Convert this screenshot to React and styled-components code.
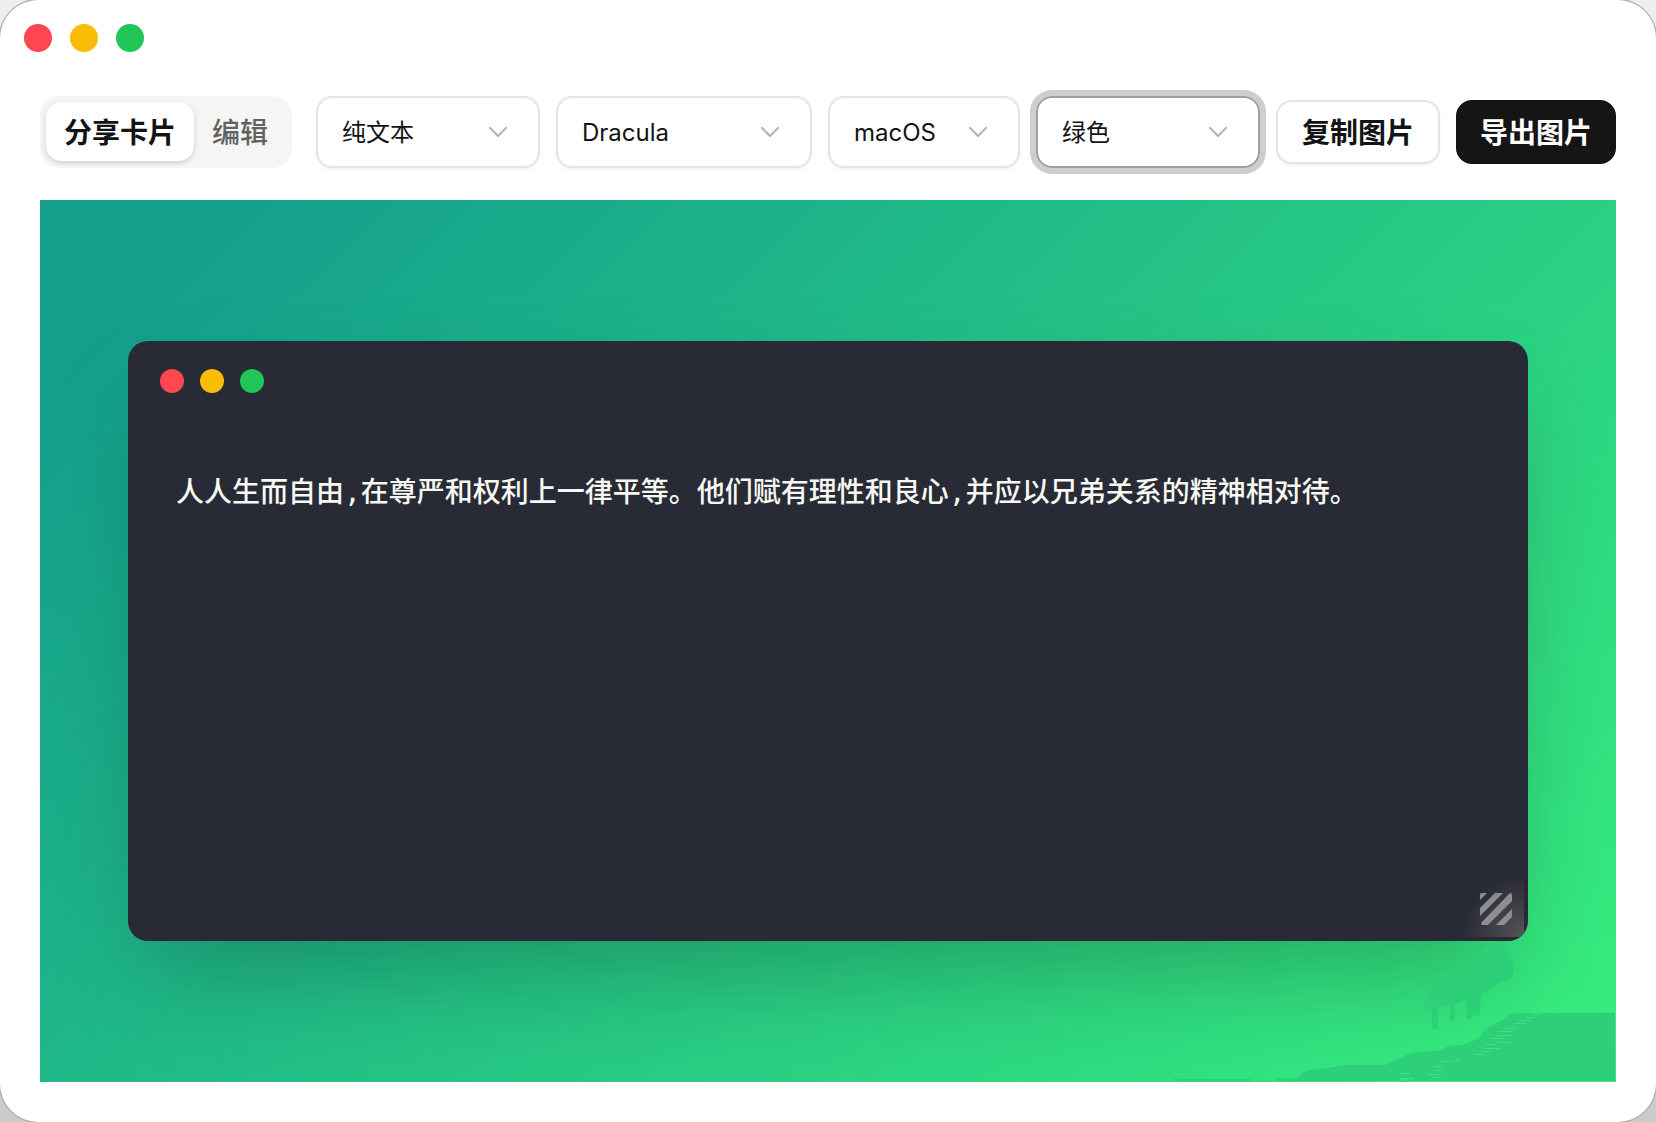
import React from 'react'
import styled, { createGlobalStyle } from 'styled-components'


const themes = [
  { label: '纯文本', width: 224, cjk: true },
  { label: 'Dracula', width: 256 },
  { label: 'macOS', width: 192 },
  { label: '绿色', width: 224, cjk: true, focused: true },
]

function Lights({ size, gap }) {
  return (
    <LightRow $gap={gap}>
      <Light $size={size} $color='#ff474f' />
      <Light $size={size} $color='#f8bd04' />
      <Light $size={size} $color='#20c657' />
    </LightRow>
  )
}

function Chevron() {
  return (
    <svg width='20' height='12' viewBox='0 0 20 12' fill='none'>
      <path d='M2 2 L10 10 L18 2' stroke='#b9b9ba' strokeWidth='2.4' strokeLinecap='round' strokeLinejoin='round' />
    </svg>
  )
}

function App() {
  return (
<>
<GlobalStyle />
<Desktop>
<Window>
  <TitleBar>
    <Lights size={28} gap={18} />
  </TitleBar>
  <Toolbar>
    <Segmented>
      <Segment $active>分享卡片</Segment>
      <Segment>编辑</Segment>
    </Segmented>
    {themes.map((item) => (
      <Select key={item.label} $width={item.width} $focused={item.focused}>
        <Label $cjk={item.cjk}>{item.label}</Label>
        <Chevron />
      </Select>
    ))}
    <Button>复制图片</Button>
    <Button $primary>导出图片</Button>
  </Toolbar>
  <Canvas>
    <Banding viewBox='1160 940 456 142'>
      <path d='M1483 948 L1506 944 L1508 958 L1514 963 L1514 970 L1511 980 L1500 982 L1492 988 L1481 994 L1480 1016 L1475 1015 L1467 1020 L1466 999 L1455 1005 L1454 1021 L1450 1021 L1450 1005 L1438 1007 L1438 1029 L1432 1029 L1432 1009 L1424 1009 L1425 997 L1429 986 L1450 978 L1472 966 Z' />
      <path d='M1370 993 h14 l-2 3 l-6 3 l-5 -3 Z M1403 989 h6 v8 h-5 Z' />
      <path d='M1615 1013 H1511 L1502 1020 L1486 1029 L1478 1039 L1462 1045 L1448 1046 L1442 1050 L1433 1051 L1411 1053 L1393 1061 L1385 1065 H1346 L1328 1068 L1309 1070 L1302 1073 L1297 1078 L1276 1079 V1081 H1615 Z' />
      <path d='M1173 1079 h78 v2 h-78 Z' />
      <g>
        <path d='M1534 1014.5 h8 M1526 1017.5 h10 M1519 1020.5 h12 M1516 1023.5 h10 M1505 1028.5 h10 M1498 1031.5 h14 M1496 1035.5 h14 M1490 1038.5 h14 M1498 1042.5 h14 M1486 1044.5 h10 M1484 1048.5 h16 M1480 1051.5 h12 M1474 1054.5 h12 M1440 1061.5 h10 M1454 1060.5 h6 M1434 1066.5 h8 M1400 1073.5 h10 M1434 1070.5 h8 M1428 1074.5 h14 M1400 1078.5 h14 M1432 1077.5 h8 M1398 1080 h10' />
      </g>
    </Banding>
    <Card>
      <Lights size={24} gap={16} />
      <Code>人人生而自由,在尊严和权利上一律平等。他们赋有理性和良心,并应以兄弟关系的精神相对待。</Code>
      <Grip>
        <svg width='32' height='32' viewBox='0 0 32 32'>
          <path d='M0 2 Q0 0 2 0 H7 L0 7 Z M15 0 H23 L0 23 V15 Z M30 0 Q32 0 32 2 V8 L8 32 H2 L1 30 Z M32 16 V24 L24 32 H16 Z' fill='#8e8e91' />
        </svg>
      </Grip>
    </Card>
  </Canvas>
</Window>
</Desktop>
</>
  )
}

export default App

const GlobalStyle = createGlobalStyle`
  * {
    box-sizing: border-box;
  }

  body {
    margin: 0;
    font-family: Inter, 'Noto Sans CJK SC', sans-serif;
    color: #121314;
  }
`

const Desktop = styled.div`
  width: 1656px;
  height: 1122px;
  background: linear-gradient(#efefed, #cbcbca);
  overflow: hidden;
`

const Window = styled.div`
  height: 100%;
  padding: 24px 40px 40px;
  background: #fff;
  border-radius: 38px;
  box-shadow: 0 0 0 1px #a5a5a5;
`

const TitleBar = styled.div`
  height: 72px;
  margin-left: -16px;
`

const LightRow = styled.div`
  display: flex;
  gap: ${(p) => p.$gap}px;
`

const Light = styled.div`
  width: ${(p) => p.$size}px;
  height: ${(p) => p.$size}px;
  border-radius: 50%;
  background: ${(p) => p.$color};
`

const Toolbar = styled.div`
  display: flex;
  align-items: center;
  height: 72px;
  gap: 16px;
`

const Segmented = styled.div`
  display: flex;
  width: 252px;
  height: 72px;
  margin-right: 8px;
  padding: 6px;
  border-radius: 20px;
  background: #f5f5f4;
`

const Segment = styled.div`
  display: flex;
  align-items: center;
  justify-content: center;
  width: ${(p) => (p.$active ? 148 : 92)}px;
  height: 59px;
  padding-bottom: 2px;
  border-radius: 15px;
  font-size: 28px;
  font-weight: ${(p) => (p.$active ? 600 : 500)};
  color: ${(p) => (p.$active ? '#121314' : '#626264')};
  background: ${(p) => (p.$active ? '#fff' : 'none')};
  box-shadow: ${(p) => (p.$active ? '0 2px 5px rgba(0, 0, 0, 0.16)' : 'none')};
`

const Select = styled.div`
  display: flex;
  align-items: center;
  justify-content: space-between;
  width: ${(p) => p.$width}px;
  height: 72px;
  padding: 0 30px 0 24px;
  border: 2px solid ${(p) => (p.$focused ? '#9f9f9f' : '#e4e4e4')};
  border-radius: 16px;
  font-size: 24px;
  box-shadow: ${(p) => (p.$focused ? '0 0 0 6px #cececc' : '0 2px 3px rgba(0, 0, 0, 0.05)')};
`

const Label = styled.span`
  padding-bottom: ${(p) => (p.$cjk ? 3 : 0)}px;
`

const Button = styled.div`
  display: flex;
  align-items: center;
  justify-content: center;
  width: ${(p) => (p.$primary ? 160 : 164)}px;
  height: 64px;
  padding-bottom: 2px;
  border: 2px solid ${(p) => (p.$primary ? '#151516' : '#e4e4e4')};
  border-radius: 16px;
  font-size: 28px;
  font-weight: 600;
  color: ${(p) => (p.$primary ? '#fff' : '#121314')};
  background: ${(p) => (p.$primary ? '#151516' : '#fff')};
  box-shadow: ${(p) => (p.$primary ? 'none' : '0 2px 3px rgba(0, 0, 0, 0.05)')};
`

const Canvas = styled.div`
  position: relative;
  height: 882px;
  margin-top: 32px;
  padding: 141px 88px;
  background: linear-gradient(135deg, #149f8d 8%, #38ef7d);
  overflow: hidden;
`

// flat patches where the gradient breaks up in the corner
const Banding = styled.svg`
  position: absolute;
  right: 0;
  bottom: 0;
  z-index: 1;
  width: 456px;
  height: 142px;
  fill: #2ecf79;

  g {
    stroke: #36e67c;
    stroke-width: 1;
  }
`

const Card = styled.div`
  position: relative;
  height: 600px;
  padding: 28px 32px;
  border-radius: 20px;
  background: #282a36;
  box-shadow: 0 50px 100px -24px rgba(0, 0, 0, 0.25);
  overflow: hidden;
`

const Code = styled.div`
  margin: 76px 0 0 16px;
  font-family: 'DejaVu Sans Mono', 'Noto Sans CJK SC', monospace;
  font-size: 28px;
  font-weight: 500;
  line-height: 48px;
  color: #f8f8f2;
  white-space: nowrap;
`

const Grip = styled.div`
  position: absolute;
  right: 4px;
  bottom: 4px;
  width: 64px;
  height: 64px;
  padding: 20px 0 0 20px;
  background: radial-gradient(circle at 100% 100%, #55555a, rgba(40, 42, 54, 0) 62px);
`
